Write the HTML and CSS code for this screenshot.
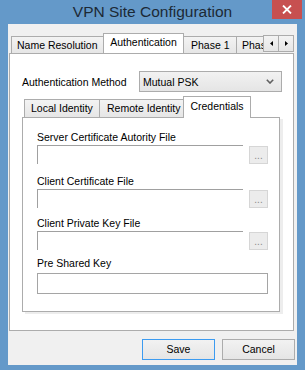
FILE: index.html
```html
<!DOCTYPE html>
<html>
<head>
<meta charset="utf-8">
<link rel="stylesheet" href="styles.css">
</head>
<body>
<div class="window">
  <div class="titlebar">
    <span class="title">VPN Site Configuration</span>
    <div class="close">
      <svg width="10" height="9" viewBox="0 0 10 9"><path d="M1 0.5 L9 8.5 M9 0.5 L1 8.5" stroke="#fff" stroke-width="1.8"/></svg>
    </div>
  </div>
  <div class="client">
    <div class="tabctl outer">
      <div class="tabrow outer-row">
        <div class="tabs">
          <div class="tab w-nr">Name Resolution</div>
          <div class="tab sel w-auth">Authentication</div>
          <div class="tab w-p1">Phase 1</div>
          <div class="tab w-p2">Phase 2</div>
        </div>
        <div class="scroll">
          <div class="sbtn"><svg width="3" height="5" viewBox="0 0 3 5"><path d="M3 0 L0 2.5 L3 5 Z" fill="#000"/></svg></div>
          <div class="sbtn"><svg width="3" height="5" viewBox="0 0 3 5"><path d="M0 0 L3 2.5 L0 5 Z" fill="#000"/></svg></div>
        </div>
      </div>
      <div class="page outer-page">
        <div class="method-row">
          <span>Authentication Method</span>
          <div class="select">
            <span>Mutual PSK</span>
            <svg width="8" height="5" viewBox="0 0 8 5"><path d="M0.8 0.8 L4 4 L7.2 0.8" stroke="#606060" stroke-width="1.6" fill="none"/></svg>
          </div>
        </div>
        <div class="tabctl inner">
          <div class="tabrow inner-row">
            <div class="tab w-li">Local Identity</div>
            <div class="tab w-ri">Remote Identity</div>
            <div class="tab sel w-cr">Credentials</div>
          </div>
          <div class="page inner-page">
            <div class="field f1">
              <div class="label">Server Certificate Autority File</div>
              <div class="filerow"><div class="box"></div><div class="browse">...</div></div>
            </div>
            <div class="field f2">
              <div class="label">Client Certificate File</div>
              <div class="filerow"><div class="box"></div><div class="browse">...</div></div>
            </div>
            <div class="field f3">
              <div class="label">Client Private Key File</div>
              <div class="filerow"><div class="box"></div><div class="browse">...</div></div>
            </div>
            <div class="field f4">
              <div class="label">Pre Shared Key</div>
              <div class="psk"></div>
            </div>
          </div>
        </div>
      </div>
    </div>
    <div class="buttons">
      <div class="btn focus">Save</div>
      <div class="btn">Cancel</div>
    </div>
  </div>
</div>
</body>
</html>
```
FILE: styles.css
```css
* { box-sizing: border-box; }
html, body { margin: 0; padding: 0; }
body {
  font-family: "Liberation Sans", Arial, sans-serif;
  font-size: 10.5px;
  color: #000;
  background: #6399c9;
}
.window {
  width: 305px;
  height: 370px;
  background: #6499c9;
  display: flex;
  flex-direction: column;
}
.titlebar {
  position: relative;
  height: 24px;
  display: flex;
  align-items: center;
  justify-content: center;
}
.title {
  font-size: 15.5px;
  color: #1c2935;
  margin-top: -1px;
}
.close {
  position: absolute;
  top: 0;
  right: 3px;
  width: 30px;
  height: 19px;
  background: #c75050;
  display: flex;
  align-items: center;
  justify-content: center;
}
.client {
  margin: 0 8px 5px 8px;
  height: 341px;
  background: #f0f0f0;
  padding: 9px 0 0 1px;
}
.tabctl.outer { width: 285px; }
.tabrow {
  display: flex;
  align-items: flex-end;
}
.outer-row { padding-left: 2px; height: 20px; }
.tabs {
  width: 252px;
  display: flex;
  align-items: flex-end;
  overflow: hidden;
  height: 20px;
}
.tab {
  flex: none;
  border: 1px solid #acacac;
  border-bottom: none;
  background: linear-gradient(#f3f3f3, #e6e6e6);
  margin-right: -1px;
  height: 17px;
  line-height: 16px;
  padding-left: 5px;
  white-space: nowrap;
  overflow: hidden;
}
.tab.sel {
  position: relative;
  z-index: 1;
  background: #fff;
  height: 21px;
  margin-bottom: -1px;
  line-height: 17px;
  padding-left: 0;
  text-align: center;
}
.w-nr { width: 93px; }
.w-auth { width: 81px; }
.w-p1 { width: 54px; padding-left: 7px; }
.w-p2 { width: 54px; }
.scroll {
  display: flex;
  align-self: flex-start;
  margin-top: 2px;
}
.sbtn {
  width: 16px;
  height: 17px;
  border: 1px solid #acacac;
  background: linear-gradient(#f3f3f3, #e6e6e6);
  display: flex;
  align-items: center;
  justify-content: center;
}
.sbtn + .sbtn { margin-left: -1px; }
.page {
  border: 1px solid #acacac;
  background: #fff;
}
.outer-page {
  height: 278px;
  padding: 17px 11px 0 12px;
}
.method-row {
  height: 21px;
  display: flex;
  align-items: center;
  justify-content: space-between;
}
.select {
  width: 143px;
  height: 21px;
  border: 1px solid #acacac;
  background: linear-gradient(#f2f2f2, #e5e5e5);
  display: flex;
  align-items: center;
  justify-content: space-between;
  padding: 0 7px 0 3px;
}
.tabctl.inner {
  width: 258px;
  margin-top: 4px;
}
.inner-row { padding-left: 2px; height: 21px; }
.inner-row .tab { height: 18px; line-height: 17px; }
.inner-row .tab.sel { height: 22px; line-height: 18px; }
.w-li { width: 76px; padding-left: 6px; }
.w-ri { width: 85px; padding-left: 7px; }
.w-cr { width: 68px; }
.inner-page {
  height: 195px;
  padding: 12px 0 0 14px;
  box-shadow: 3px 2px 0 0 #ededed;
}
.label {
  line-height: 14px;
  white-space: nowrap;
}
.f2 { margin-top: 10px; }
.f3 { margin-top: 8px; }
.f4 { margin-top: 6px; }
.filerow {
  display: flex;
  margin-top: 1px;
  gap: 6px;
}
.box {
  width: 206px;
  height: 19px;
  border-top: 1px solid #a0a0a0;
  border-left: 1px solid #a0a0a0;
}
.browse {
  margin-top: 1px;
  width: 19px;
  height: 18px;
  border: 1px solid #d6d6d6;
  background: #ececec;
  color: #8a8a8a;
  text-align: center;
  line-height: 17px;
  font-size: 10px;
}
.psk {
  margin-top: 3px;
  width: 231px;
  height: 21px;
  border: 1px solid #a5a5a5;
}
.buttons {
  margin-top: 8px;
  display: flex;
  justify-content: flex-end;
  gap: 7px;
  padding-right: 2px;
}
.btn {
  width: 73px;
  height: 21px;
  border: 1px solid #acacac;
  background: linear-gradient(#f2f2f2, #e5e5e5);
  text-align: center;
  line-height: 19px;
}
.btn.focus { border-color: #3c9bf0; }
```
